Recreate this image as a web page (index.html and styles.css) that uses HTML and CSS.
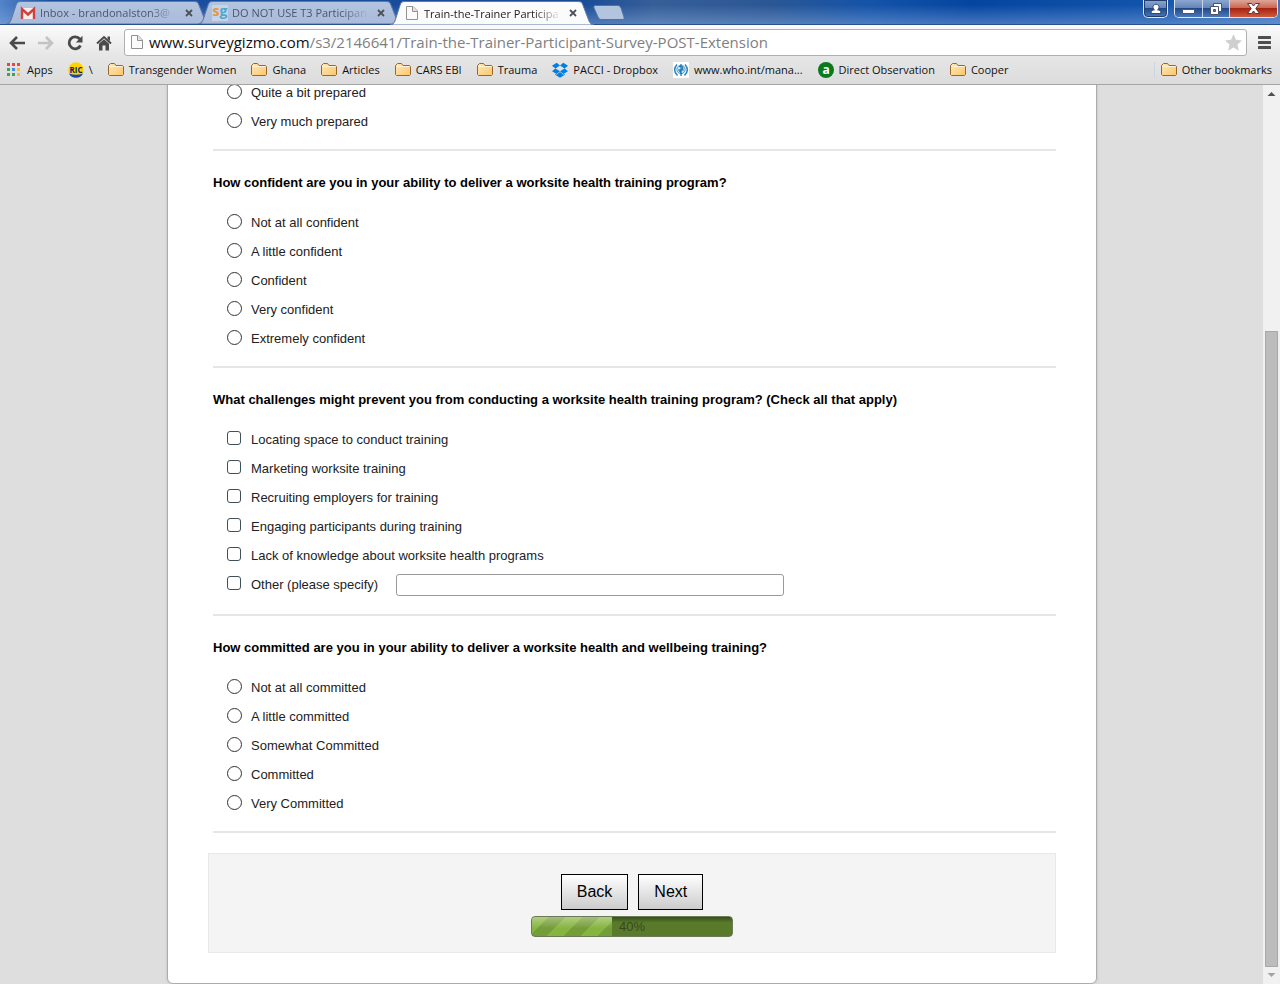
FILE: index.html
```
<!DOCTYPE html>
<html lang="en">

<head>
    <meta charset="UTF-8">
    <meta name="viewport" content="width=device-width, initial-scale=1.0">
    <title>Train-the-Trainer Participant Survey</title>
    <link rel="stylesheet" href="styles.css">
</head>

<body>
    <!-- shared icons -->
    <svg class="sprite" width="0" height="0" aria-hidden="true">
        <defs>
            <linearGradient id="folder-fill" x1="0" y1="0" x2="1" y2="1">
                <stop offset="0" stop-color="#ffe9b8" />
                <stop offset="1" stop-color="#fbc66c" />
            </linearGradient>
            <linearGradient id="tab-fill" x1="0" y1="0" x2="0" y2="1">
                <stop offset="0" stop-color="#b4c5e0" />
                <stop offset="1" stop-color="#a9badb" />
            </linearGradient>
        </defs>
        <symbol id="folder" viewBox="0 0 16 16">
            <path d="M.5 12.5V3.5L2.5 1.5H6.5L8 3.500H14.5L15.5 4.500V12.500L14.5 13.500H1.500Z" fill="url(#folder-fill)" stroke="#98672f" />
            <path d="M1.500 4.500H14.500" stroke="#fff3d2" fill="none" />
        </symbol>
        <symbol id="page" viewBox="0 0 16 16">
            <path d="M2.5 1.5H9L13.5 6V14.5H2.5Z" fill="#fbfbfb" stroke="#929292" />
            <path d="M8.5 1.5V6.5H13.5" fill="#e4e4e4" stroke="#929292" />
        </symbol>
        <symbol id="close" viewBox="0 0 8 8">
            <path d="M1 1L7 7M7 1L1 7" stroke="#4d5158" stroke-width="1.8" />
        </symbol>
        <symbol id="tab-shape" viewBox="0 0 203 23" preserveAspectRatio="none">
            <path d="M0 23C3 23 4 21 5 19L10 4C11 1 12 0.5 14 0.5H187C190 0.5 191 1 192 4L198 19C199 21 200 23 203 23Z" />
        </symbol>
    </svg>

    <header class="browser">
        <div class="titlebar">
            <div class="tab">
                <svg class="tab-bg"><use href="#tab-shape" /></svg>
                <svg class="icon" viewBox="0 0 16 16"><path d="M1 3H15V14H1Z" fill="#f4eeee" /><path d="M2 14V4L8 9.5L14 4V14" fill="none" stroke="#d2403a" stroke-width="2.4" /></svg>
                <span class="tab-title">Inbox - brandonalston3@</span>
                <button class="tab-close" aria-label="Close tab"><svg width="8" height="8"><use href="#close" /></svg></button>
            </div>
            <div class="tab">
                <svg class="tab-bg"><use href="#tab-shape" /></svg>
                <span class="icon sg-icon">s<span>g</span></span>
                <span class="tab-title">DO NOT USE T3 Participan</span>
                <button class="tab-close" aria-label="Close tab"><svg width="8" height="8"><use href="#close" /></svg></button>
            </div>
            <div class="tab active">
                <svg class="tab-bg"><use href="#tab-shape" /></svg>
                <svg class="icon"><use href="#page" /></svg>
                <span class="tab-title">Train-the-Trainer Participa</span>
                <button class="tab-close" aria-label="Close tab"><svg width="8" height="8"><use href="#close" /></svg></button>
            </div>
            <button class="new-tab" aria-label="New tab">
                <svg width="32" height="15" viewBox="0 0 32 15"><path d="M3 .5H24C26 .5 27 1 28 3L31 12C31.500 14 31 14.500 29 14.500H9C7 14.500 6 14 5 12L1 3C.500 1 1 .5 3 .5Z" fill="#b3c4de" stroke="#4f73a8" /></svg>
            </button>
            <div class="window-buttons">
                <button class="win user" aria-label="User">
                    <svg width="12" height="12" viewBox="0 0 12 12"><path d="M1 10.500C1 7.500 3 7 4.500 6.800A3 3 0 1 1 7.500 6.800C9 7 11 7.500 11 10.500Z" fill="#fff" stroke="#33486b" /></svg>
                </button>
                <div class="win-group">
                    <button class="win" aria-label="Minimize">
                        <svg width="13" height="12" viewBox="0 0 13 12"><path d="M.5 6.500H12.500V10.500H.5Z" fill="#fff" stroke="#4d5568" /></svg>
                    </button>
                    <button class="win" aria-label="Restore">
                        <svg width="12" height="12" viewBox="0 0 12 12"><path d="M3.500 .5H11.500V8.500H3.500Z" fill="#fff" stroke="#4d5568" /><path d="M.5 3.500H8.500V11.500H.5Z" fill="#fff" stroke="#4d5568" /><path d="M3.500 6.500H5.500V8.500H3.500Z" fill="#5d7299" stroke="#4d5568" /></svg>
                    </button>
                    <button class="win close" aria-label="Close">
                        <svg width="13" height="11" viewBox="0 0 13 11"><path d="M.5 .5H4.500L6.500 3L8.500 .5H12.500L8.800 5.500L12.500 10.500H8.500L6.500 8L4.500 10.500H.5L4.200 5.500Z" fill="#fff" stroke="#5a3a40" /></svg>
                    </button>
                </div>
            </div>
        </div>

        <div class="toolbar">
            <button class="tool" aria-label="Back"><svg width="18" height="16" viewBox="0 0 18 16"><path d="M17 8H3M9 2L3 8L9 14" fill="none" stroke="#4a4a4a" stroke-width="2.6" /></svg></button>
            <button class="tool" aria-label="Forward" disabled><svg width="18" height="16" viewBox="0 0 18 16"><path d="M1 8H15M9 2L15 8L9 14" fill="none" stroke="#c3c3c3" stroke-width="2.6" /></svg></button>
            <button class="tool" aria-label="Reload"><svg width="18" height="16" viewBox="0 0 18 16"><path d="M14.500 10.500A6 6 0 1 1 13.800 4" fill="none" stroke="#4a4a4a" stroke-width="2.8" /><path d="M16.500 .8V7.500H9.800Z" fill="#4a4a4a" /></svg></button>
            <button class="tool" aria-label="Home"><svg width="18" height="16" viewBox="0 0 18 16"><path d="M2 8.500L9 2L16 8.500" fill="none" stroke="#4a4a4a" stroke-width="2" /><path d="M12.500 1.500H15V6L12.500 4Z" fill="#4a4a4a" /><path d="M4 8.800L9 4.300L14 8.800V15.500H10.500V10.500H7.500V15.500H4Z" fill="#4a4a4a" /></svg></button>
            <div class="address">
                <svg class="icon"><use href="#page" /></svg>
                <span class="url"><span class="host">www.surveygizmo.com</span>/s3/2146641/Train-the-Trainer-Participant-Survey-POST-Extension</span>
                <button class="star" aria-label="Bookmark this page"><svg width="17" height="17" viewBox="0 0 17 17"><path d="M8.500 0L11 5.800L17 6.400L12.500 10.500L13.800 16.700L8.500 13.500L3.200 16.700L4.500 10.500L0 6.400L6 5.800Z" fill="#cfcfcf" /></svg></button>
            </div>
            <button class="menu" aria-label="Menu"><svg width="13" height="13" viewBox="0 0 13 13"><path d="M1 1.500H12M1 6.500H12M1 11.500H12" stroke="#4f4f4f" stroke-width="3" stroke-linecap="round" /></svg></button>
        </div>

        <nav class="bookmarks">
            <a href="#"><svg class="icon" viewBox="0 0 16 16"><path d="M1 1H4V4H1ZM6 1H9V4H6ZM11 1H14V4H11Z" fill="#e8453c" /><path d="M1 6H4V9H1Z" fill="#3aa757" /><path d="M6 6H9V9H6Z" fill="#4688f1" /><path d="M11 6H14V9H11Z" fill="#f9bb2d" /><path d="M1 11H4V14H1ZM6 11H9V14H6Z" fill="#3aa757" /><path d="M11 11H14V14H11Z" fill="#f9bb2d" /></svg>Apps</a>
            <a href="#"><svg class="icon" viewBox="0 0 16 16"><circle cx="8" cy="8" r="7.800" fill="#ffd200" /><path d="M1 11.500Q8 14 15 11.500A7.800 7.800 0 0 1 1 11.500Z" fill="#1745b5" /><text x="8" y="10.500" text-anchor="middle" class="ric-text">RIC</text></svg>\</a>
            <a href="#"><svg class="icon"><use href="#folder" /></svg>Transgender Women</a>
            <a href="#"><svg class="icon"><use href="#folder" /></svg>Ghana</a>
            <a href="#"><svg class="icon"><use href="#folder" /></svg>Articles</a>
            <a href="#"><svg class="icon"><use href="#folder" /></svg>CARS EBI</a>
            <a href="#"><svg class="icon"><use href="#folder" /></svg>Trauma</a>
            <a href="#"><svg class="icon" viewBox="0 0 16 16"><path d="M4.700 .8L8 3.500L3.400 6.400L0 3.700ZM11.300 .8L16 3.700L12.600 6.400L8 3.500ZM0 9.200L3.400 6.400L8 9.300L4.700 12ZM12.600 6.400L16 9.200L11.300 12L8 9.300ZM8 10L11.300 12.700L12.800 11.800V12.800L8 15.700L3.200 12.800V11.800L4.700 12.700Z" fill="#007ee5" /></svg>PACCI - Dropbox</a>
            <a href="#"><svg class="icon" viewBox="0 0 16 16"><path d="M0 0H16V16H0Z" fill="#fff" /><circle cx="8" cy="7.500" r="4.200" fill="#c9e2f1" stroke="#4b9ccb" /><path d="M4 2.500Q-1 8 4.500 13.500M12 2.500Q17 8 11.500 13.500" fill="none" stroke="#2b86bd" stroke-width="1.500" /><path d="M8 2V14M6 4.500Q11 4 9.500 6.500T7 9T9 12M5 8H11" fill="none" stroke="#1876b2" stroke-width="1.200" /></svg>www.who.int/mana...</a>
            <a href="#"><svg class="icon" viewBox="0 0 16 16"><circle cx="8" cy="8" r="8" fill="#0a7a1d" /><text x="8" y="11.500" text-anchor="middle" class="a-text">a</text></svg>Direct Observation</a>
            <a href="#"><svg class="icon"><use href="#folder" /></svg>Cooper</a>
            <a href="#" class="other-bookmarks"><svg class="icon"><use href="#folder" /></svg>Other bookmarks</a>
        </nav>
    </header>

    <div class="viewport">
        <main class="page">
            <form class="survey">
                <fieldset class="question">
                    <label class="option"><input type="radio" name="prepared">Quite a bit prepared</label>
                    <label class="option"><input type="radio" name="prepared">Very much prepared</label>
                </fieldset>

                <fieldset class="question">
                    <legend>How confident are you in your ability to deliver a worksite health training program?</legend>
                    <label class="option"><input type="radio" name="confident">Not at all confident</label>
                    <label class="option"><input type="radio" name="confident">A little confident</label>
                    <label class="option"><input type="radio" name="confident">Confident</label>
                    <label class="option"><input type="radio" name="confident">Very confident</label>
                    <label class="option"><input type="radio" name="confident">Extremely confident</label>
                </fieldset>

                <fieldset class="question">
                    <legend>What challenges might prevent you from conducting a worksite health training program? (Check all that apply)</legend>
                    <label class="option"><input type="checkbox" name="challenges">Locating space to conduct training</label>
                    <label class="option"><input type="checkbox" name="challenges">Marketing worksite training</label>
                    <label class="option"><input type="checkbox" name="challenges">Recruiting employers for training</label>
                    <label class="option"><input type="checkbox" name="challenges">Engaging participants during training</label>
                    <label class="option"><input type="checkbox" name="challenges">Lack of knowledge about worksite health programs</label>
                    <div class="other-row">
                        <label class="option"><input type="checkbox" name="challenges">Other (please specify)</label>
                        <input type="text" class="other-text" aria-label="Other (please specify)">
                    </div>
                </fieldset>

                <fieldset class="question">
                    <legend>How committed are you in your ability to deliver a worksite health and wellbeing training?</legend>
                    <label class="option"><input type="radio" name="committed">Not at all committed</label>
                    <label class="option"><input type="radio" name="committed">A little committed</label>
                    <label class="option"><input type="radio" name="committed">Somewhat Committed</label>
                    <label class="option"><input type="radio" name="committed">Committed</label>
                    <label class="option"><input type="radio" name="committed">Very Committed</label>
                </fieldset>

                <div class="survey-nav">
                    <div class="buttons">
                        <button type="button">Back</button>
                        <button type="button">Next</button>
                    </div>
                    <div class="progress" role="progressbar" aria-valuenow="40" aria-valuemin="0" aria-valuemax="100">
                        <div class="bar" style="width: 40%"></div>
                        <span>40%</span>
                    </div>
                </div>
            </form>
        </main>
        <div class="scrollbar">
            <svg width="17" height="17" viewBox="0 0 17 17"><path d="M4.500 11L8.500 7L12.500 11Z" fill="#505050" /></svg>
            <div class="track">
                <div class="thumb"></div>
            </div>
            <svg width="17" height="17" viewBox="0 0 17 17"><path d="M4.500 6L8.500 10L12.500 6Z" fill="#a3a3a3" /></svg>
        </div>
    </div>
</body>

</html>
```

FILE: styles.css
```
* {
    box-sizing: border-box;
}

body {
    margin: 0;
    height: 100vh;
    display: flex;
    flex-direction: column;
    overflow: hidden;
    background-color: #dedede;
    font-family: "Liberation Sans", Arial, sans-serif;
    font-size: 13px;
    color: #222;
}

button {
    font-family: inherit;
    padding: 0;
    border: none;
    background: none;
}

.sprite {
    position: absolute;
}

.icon {
    flex: none;
    width: 16px;
    height: 16px;
}

/* browser window */

.browser {
    flex: none;
    font-family: "Open Sans", "Noto Sans", sans-serif;
    font-size: 11px;
    background: linear-gradient(#fbfbfb 25px, #e6e6e6 56px, #dcdcdc);
    border-bottom: 1px solid #a5a5a5;
}

.titlebar {
    display: flex;
    align-items: flex-end;
    height: 25px;
    padding-left: 6px;
    background:
        linear-gradient(rgba(255, 255, 255, 0) 20%, rgba(140, 175, 225, 0.45)),
        linear-gradient(90deg, #5383c9, #1c4f9f 4%, #174a97 45%, #365f98 51%, #2b5794 60%, #1453a8 68%, #0545a0 76%, #1254ab 90%, #3c72bb);
    border-bottom: 1px solid #284f8c;
}

.tab {
    position: relative;
    display: flex;
    align-items: center;
    gap: 4px;
    flex: 0 1 204px;
    min-width: 0;
    height: 23px;
    padding: 0 17px 0 14px;
    margin-right: -12px;
    color: #4a566c;
}

.tab-bg {
    position: absolute;
    inset: 0;
    width: 100%;
    height: 100%;
    fill: url(#tab-fill);
    stroke: #5b79aa;
}

.tab.active {
    z-index: 1;
    margin-bottom: -1px;
    height: 24px;
    color: #222;
}

.tab.active .tab-bg {
    fill: #fbfbfb;
}

.tab .icon,
.tab-title,
.tab-close {
    position: relative;
}

.tab-title {
    flex: 1;
    min-width: 0;
    overflow: hidden;
    white-space: nowrap;
    -webkit-mask-image: linear-gradient(90deg, #000 80%, transparent);
    mask-image: linear-gradient(90deg, #000 80%, transparent);
}

.tab-close {
    display: flex;
    margin-left: 4px;
}

.sg-icon {
    background-color: #c7d4e7;
    font-size: 14px;
    font-weight: bold;
    line-height: 12px;
    text-align: center;
    color: #e3963c;
}

.sg-icon span {
    color: #4ba9cd;
}

.new-tab {
    display: flex;
    margin: 0 0 4px 11px;
}

.window-buttons {
    display: flex;
    gap: 6px;
    align-self: flex-start;
    margin: 0 2px 0 auto;
}

.win {
    display: flex;
    align-items: center;
    justify-content: center;
    width: 27px;
    height: 17px;
    background: linear-gradient(#8ba7d0, #6685b8 45%, #21498a 50%, #4b79bc);
}

.win.user,
.win-group {
    border: 1px solid #dbe6f5;
    border-top: none;
    border-radius: 0 0 5px 5px;
    box-shadow: inset 0 0 0 1px #213e6e;
    overflow: hidden;
    height: 18px;
}

.win.user {
    width: 25px;
}

.win-group {
    display: flex;
}

.win + .win {
    border-left: 1px solid #c6d3e8;
}

.win.close {
    width: 48px;
    background: linear-gradient(#dfa598, #c96857 45%, #a62410 50%, #cf5a3c);
}

.toolbar {
    display: flex;
    align-items: center;
    gap: 11px;
    padding: 4px 9px 0 8px;
}

.tool,
.menu,
.star {
    display: flex;
}

.address {
    display: flex;
    align-items: center;
    gap: 4px;
    flex: 1;
    min-width: 0;
    height: 27px;
    padding: 0 4px 1px;
    background-color: #fff;
    border: 1px solid #b0b0b0;
    border-radius: 3px;
}

.url {
    flex: 1;
    min-width: 0;
    overflow: hidden;
    white-space: nowrap;
    font-size: 15px;
    color: #808080;
}

.host {
    color: #111;
}

.bookmarks {
    display: flex;
    align-items: center;
    gap: 15px;
    height: 28px;
    padding: 0 8px 1px 6px;
    white-space: nowrap;
}

.bookmarks a {
    display: flex;
    align-items: center;
    gap: 5px;
    color: #111;
    text-decoration: none;
}

.ric-text {
    font: bold 8px "Open Sans", sans-serif;
    fill: #0c1d63;
}

.a-text {
    font: bold 12px "Open Sans", sans-serif;
    fill: #fff;
}

.bookmarks .other-bookmarks {
    margin-left: auto;
    padding-left: 6px;
    border-left: 1px solid #ccd6e2;
}

/* survey */

.viewport {
    display: flex;
    flex: 1;
    min-height: 0;
}

/* scrolled down to the end of the form */
.page {
    display: flex;
    flex-direction: column;
    justify-content: flex-end;
    align-items: center;
    flex: 1;
    min-width: 0;
    padding-left: 1px;
    overflow: hidden;
}

.survey {
    flex: none;
    width: 100%;
    max-width: 930px;
    padding: 0 40px 30px;
    background-color: #fff;
    border: 1px solid #acacac;
    border-radius: 6px;
    box-shadow: 0 0 3px #bbb;
}

.question {
    min-width: 0;
    margin: 0 0 0 5px;
    padding: 0 0 13px;
    border: none;
    border-bottom: 2px solid #e6e6e6;
}

.question legend {
    padding: 23px 0 16px;
    line-height: 18px;
    font-weight: bold;
    color: #000;
}

.option {
    display: flex;
    align-items: center;
    height: 29px;
    padding-left: 14px;
}

.option input {
    appearance: none;
    flex: none;
    width: 15px;
    height: 15px;
    margin: 0 9px 2px 0;
    background-color: #fff;
    border: 1px solid #333;
    border-radius: 50%;
}

.option input[type="checkbox"] {
    width: 14px;
    height: 14px;
    margin: 0 10px 3px 0;
    border-color: #3f4f5c;
    border-radius: 3px;
}

.option input:checked {
    background-color: #444;
}

.other-row {
    display: flex;
    align-items: center;
    gap: 18px;
    padding-bottom: 2px;
}

.other-text {
    flex: 0 1 388px;
    min-width: 0;
    height: 22px;
    border: 1px solid #999;
    border-radius: 3px;
}

.survey-nav {
    display: flex;
    flex-direction: column;
    align-items: center;
    gap: 6px;
    margin-top: 20px;
    padding: 20px 0 15px;
    background-color: #f4f4f4;
    border: 1px solid #e8e8e8;
}

.buttons {
    display: flex;
    gap: 10px;
}

.buttons button {
    height: 36px;
    padding: 0 15px;
    font-size: 16px;
    color: #000;
    background: linear-gradient(#fff, #ccc);
    border: 1px solid #000;
}

.progress {
    display: flex;
    align-items: center;
    width: 202px;
    height: 21px;
    overflow: hidden;
    background: linear-gradient(#35501a, #5a7a2b 30%);
    border: 1px solid #6c7a5a;
    border-radius: 4px;
    color: #37481f;
}

.progress .bar {
    height: 100%;
    margin-right: 7px;
    background:
        linear-gradient(rgba(255, 255, 255, 0.35), rgba(255, 255, 255, 0) 60%),
        repeating-linear-gradient(135deg, #86b440 0 12px, #749c38 12px 24px);
}

/* window scrollbar */

.scrollbar {
    display: flex;
    flex-direction: column;
    flex: none;
    width: 17px;
    background-color: #f1f1f1;
}

.track {
    display: flex;
    flex-direction: column;
    justify-content: flex-end;
    flex: 1;
    padding: 0 2px;
}

.thumb {
    height: 73.5%;
    background-color: #bcbcbc;
    border: 1px solid #a8a8a8;
}
```
